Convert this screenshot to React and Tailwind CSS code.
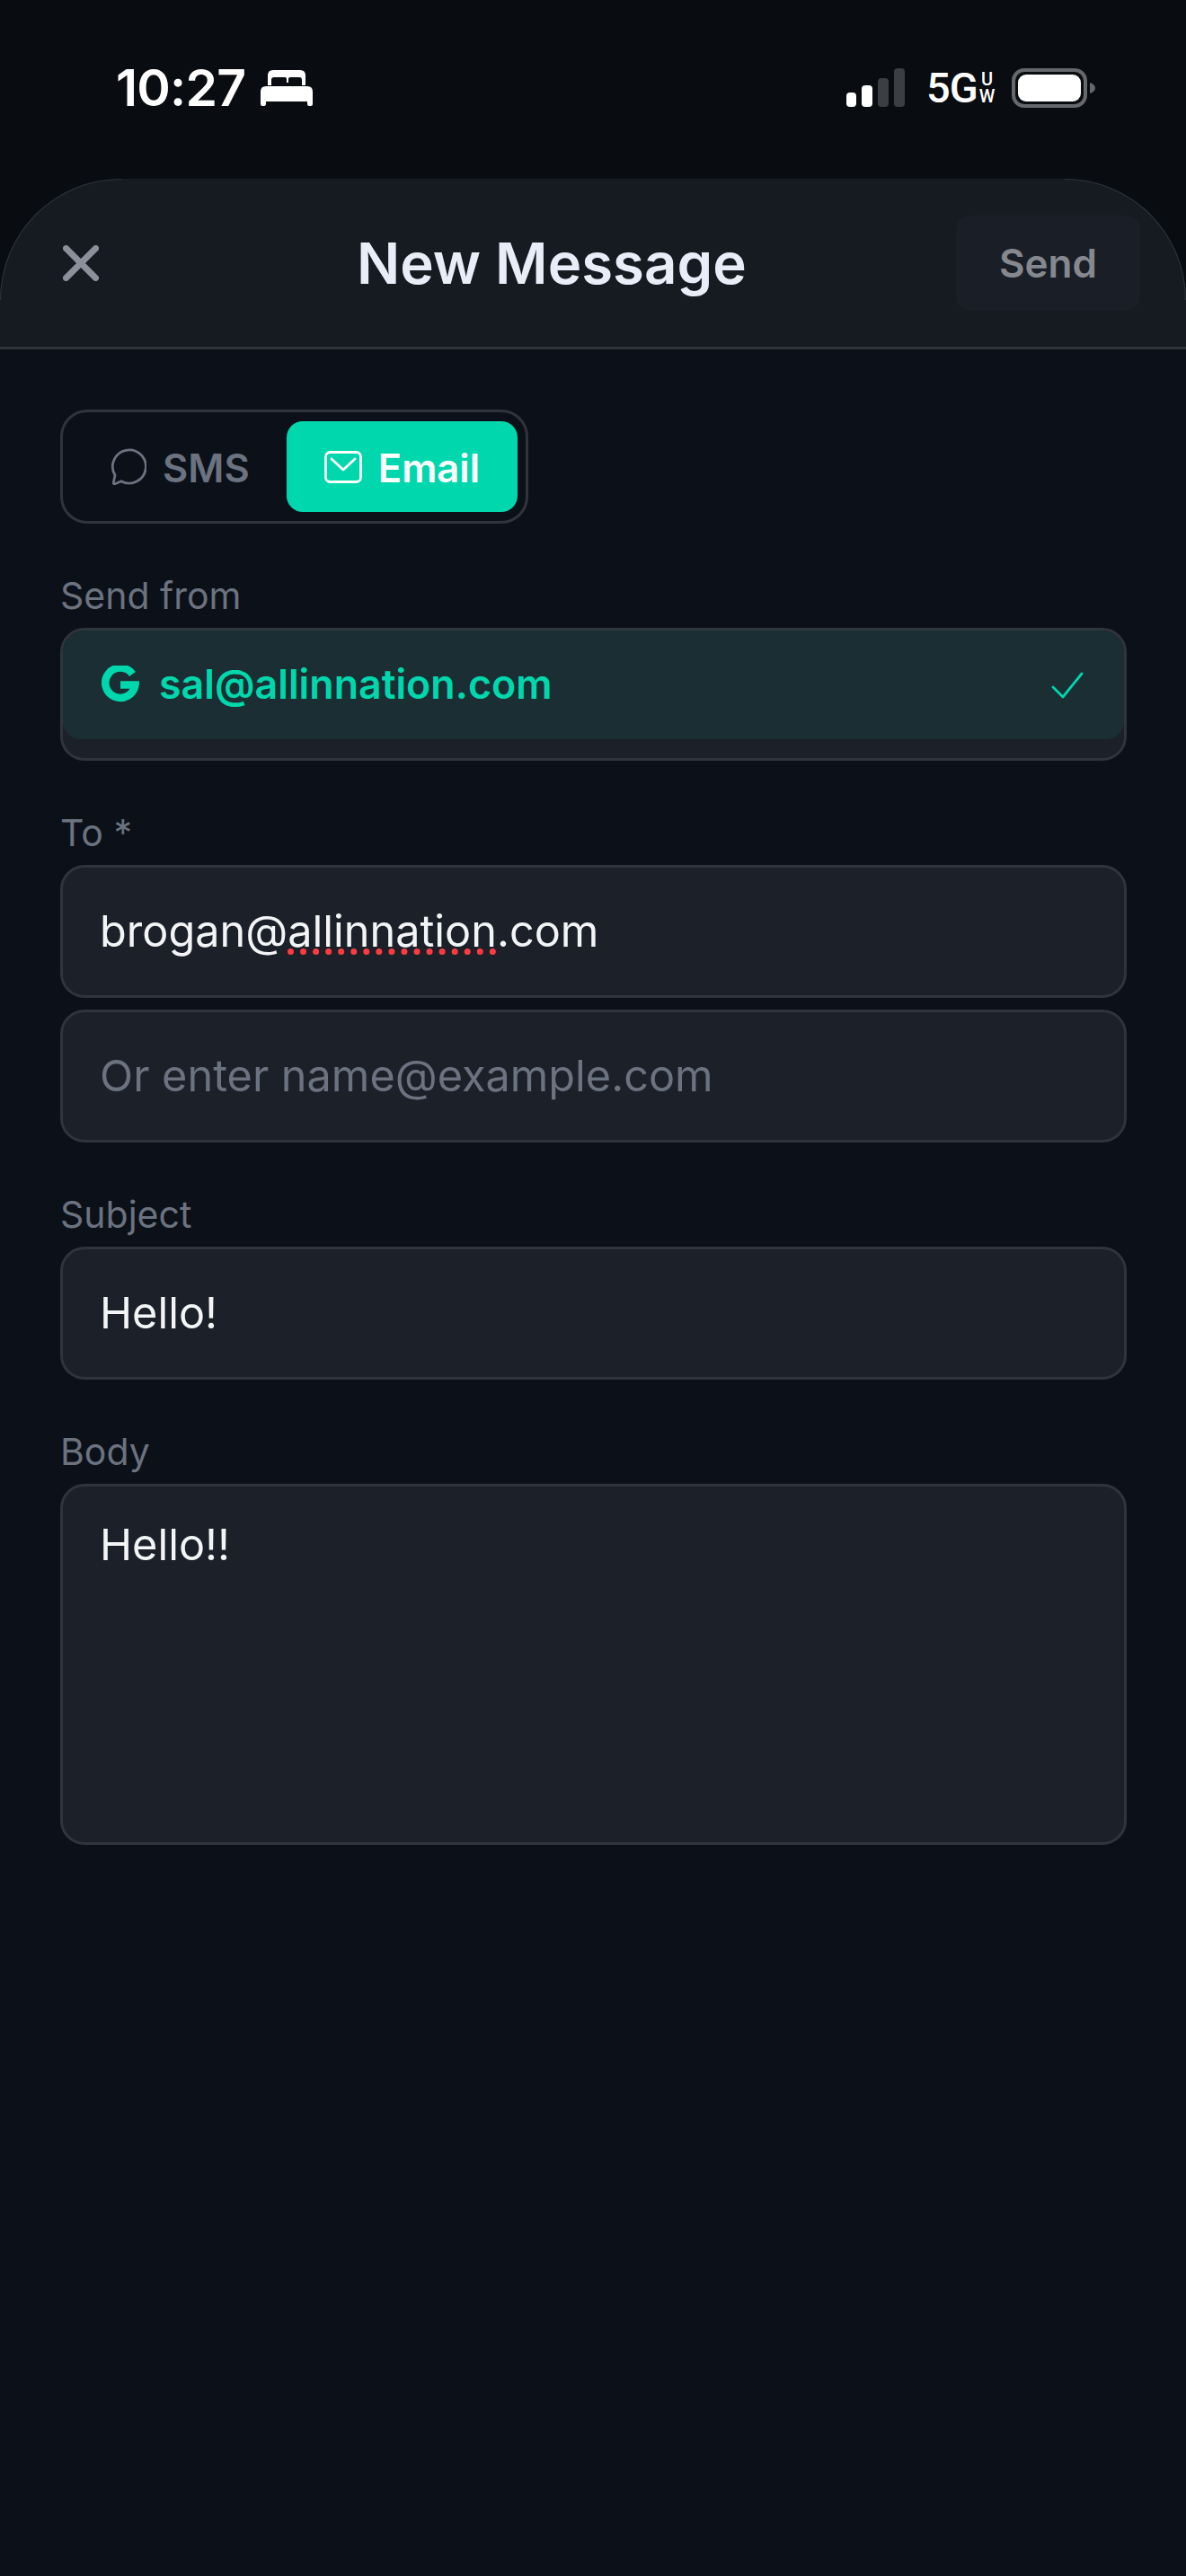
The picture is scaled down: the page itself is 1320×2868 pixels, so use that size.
import React from "react";

function Field({ children, className = "text-[#f3f4f6]" }) {
  return (
    <div className={"flex h-[148px] items-center rounded-[27px] border-[3px] border-[#2f343d] bg-[#1c2029] pl-[41px] pr-[42px] text-[48.6px] " + className}>
      {children}
    </div>
  );
}

function Label({ children }) {
  return <div className="mb-[14px] h-[44px] text-[41px] leading-[44px] text-[#6b7280]">{children}</div>;
}

export default function App() {
  return (
    <div className="flex h-[2868px] w-[1320px] flex-col overflow-hidden bg-[#0c1018] font-['Inter']">
      <div className="flex h-[199px] shrink-0 items-start justify-between bg-[#090c11] pl-[129px] pr-[101px] pt-[64px]">
        <div className="flex items-center gap-[17px] text-white">
          <span className="text-[57px] font-semibold leading-[68px] tracking-[-0.8px]">10:27</span>
          <svg width="58" height="40" viewBox="0 0 58 40" fill="#fff">
            <path d="M8 17V6Q8 0 14 0H44Q50 0 50 6V17H46V11Q46 8 43 8H33Q31 8 31 10V14H29V10Q29 8 27 8H15Q12 8 12 11V17Z" />
            <path d="M6 18H52Q58 18 58 24V38Q58 40 56 40H54Q52 40 52 37V35H6V37Q6 40 4 40H2Q0 40 0 38V24Q0 18 6 18Z" />
          </svg>
        </div>
        <div className="flex items-start pt-[12px]">
          <div className="flex h-[43px] items-end gap-[6px]">
            <div className="h-[16px] w-[11px] rounded-[4px] bg-white" />
            <div className="h-[24px] w-[12px] rounded-[4px] bg-white" />
            <div className="h-[32px] w-[12px] rounded-[4px] bg-[#3b3f44]" />
            <div className="h-[43px] w-[12px] rounded-[4px] bg-[#3b3f44]" />
          </div>
          <div className="ml-[24px] flex h-[43px] w-[72px] items-center text-white">
            <span className="font-['Roboto'] text-[47px] font-medium leading-[43px] tracking-[-1px]">5G</span>
            <span className="ml-[2px] flex flex-col text-center font-['Roboto'] text-[20px] font-medium leading-[19px]">
              <span>U</span>
              <span>W</span>
            </span>
          </div>
          <div className="ml-[23px] flex items-center">
            <div className="h-[44px] w-[84px] rounded-[14px] border-[4px] border-[#67686b] p-[3px]">
              <div className="h-full w-full rounded-[9px] bg-white" />
            </div>
            <svg className="ml-[3px]" width="6" height="12" viewBox="0 0 6 12" fill="#67686b">
              <path d="M0 0Q6 2 6 6Q6 10 0 12Z" />
            </svg>
          </div>
        </div>
      </div>

      <div className="shrink-0 bg-[#090c11]">
        <div className="relative flex h-[190px] items-center justify-between rounded-t-[135px] border-b-[3px] border-[#2f343d] bg-[#161b22] pl-[70px] pr-[51px]">
          <div className="absolute left-0 top-0 h-[135px] w-[135px] rounded-tl-[135px] border-l border-t border-[#30353c]" />
          <div className="absolute right-0 top-0 h-[135px] w-[135px] rounded-tr-[135px] border-r border-t border-[#30353c]" />
          <svg width="40" height="40" viewBox="0 0 40 40" stroke="#8b919b" strokeWidth="7" strokeLinecap="round">
            <path d="M3.5 3.5L36.5 36.5M36.5 3.5L3.5 36.5" />
          </svg>
          <div className="absolute left-[397px] text-[63.5px] font-semibold leading-[72px] text-[#e8eef7]">New Message</div>
          <div className="flex h-[106px] w-[205px] items-center justify-center rounded-[16px] bg-[#1a1e26] text-[44px] font-semibold text-[#85888e]">Send</div>
        </div>
      </div>

      <div className="flex flex-col pl-[67px] pr-[66px] pt-[67px]">
        <div className="flex h-[127px] w-[521px] items-center justify-between rounded-[30px] border-[3px] border-[#2f343d] pl-[53px] pr-[9px]">
          <div className="flex items-center gap-[18px] text-[43.5px] font-semibold leading-[56px] text-[#6b7280]">
            <svg width="40" height="42" viewBox="0 0 40 42" fill="none" stroke="#6b7280" strokeWidth="2.8" strokeLinejoin="round">
              <path d="M5 30A18.5 18.5 0 1 1 12 36.7L5 39.7Q3 40.2 3.4 38Z" />
            </svg>
            <span className="pt-[2px]">SMS</span>
          </div>
          <div className="flex h-[101px] w-[257px] items-center justify-center gap-[18px] rounded-[18px] bg-[#00d7ad] text-[43.5px] font-semibold leading-[56px] text-white">
            <svg width="42" height="36" viewBox="0 0 42 36" fill="none" stroke="#fff" strokeWidth="2.8" strokeLinejoin="round">
              <rect x="1.5" y="1.5" width="39" height="33" rx="5" />
              <path d="M8 9L21 21L34 9" strokeLinecap="round" />
            </svg>
            <span className="pt-[2px]">Email</span>
          </div>
        </div>

        <div className="mt-[58px]">
          <Label>Send from</Label>
          <div className="h-[148px] overflow-hidden rounded-[27px] border-[3px] border-[#2f343d] bg-[#1c2029]">
            <div className="flex h-[121px] items-center justify-between rounded-b-[20px] bg-[#1b2e33] pl-[43px] pr-[45px]">
              <div className="flex items-center gap-[22px] text-[44.7px] font-semibold text-[#00d7ad]">
                <svg width="42" height="42" viewBox="0 0 42 42" fill="none" stroke="#00d7ad" strokeWidth="8.5">
                  <path d="M34.5 9.5A16.7 16.7 0 1 0 37.5 21.5H21" />
                </svg>
                sal@allinnation.com
              </div>
              <svg width="36" height="30" viewBox="0 0 36 30" fill="none" stroke="#00d7ad" strokeWidth="2.8" strokeLinecap="round" strokeLinejoin="round">
                <path d="M2 17L13 28L34 2" />
              </svg>
            </div>
          </div>
        </div>

        <div className="mt-[58px]">
          <Label>To *</Label>
          <Field>
            <span>
              brogan@<span className="underline decoration-[#ff3b3f] decoration-dotted decoration-[7px] underline-offset-[2px] [text-decoration-skip-ink:none]">allinnation</span>.com
            </span>
          </Field>
          <div className="mt-[13px]">
            <Field className="text-[#6b7280]">Or enter name@example.com</Field>
          </div>
        </div>

        <div className="mt-[58px]">
          <Label>Subject</Label>
          <Field>Hello!</Field>
        </div>

        <div className="mt-[58px]">
          <Label>Body</Label>
          <div className="h-[402px] rounded-[27px] border-[3px] border-[#2f343d] bg-[#1c2029] pl-[41px] pr-[42px] pt-[35px] text-[48.6px] leading-[60px] text-[#f3f4f6]">Hello!!</div>
        </div>
      </div>
    </div>
  );
}
